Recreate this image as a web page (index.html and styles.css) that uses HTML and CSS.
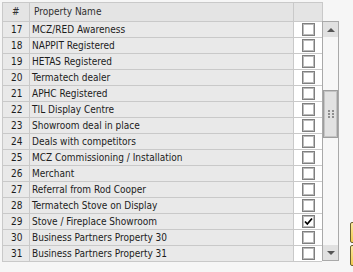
FILE: index.html
```html
<!DOCTYPE html>
<html>
<head>
<meta charset="utf-8">
<link rel="stylesheet" href="styles.css">
</head>
<body>
<div class="page">
  <div class="grid">
    <div class="head">
      <div class="h-num">#</div>
      <div class="h-name">Property Name</div>
      <div class="h-chk"></div>
    </div>
    <div class="body">
      <div class="rows">
        <div class="row"><div class="c-num">17</div><div class="c-name">MCZ/RED Awareness</div><div class="c-chk"><span class="cb"></span></div></div>
        <div class="row"><div class="c-num">18</div><div class="c-name">NAPPIT Registered</div><div class="c-chk"><span class="cb"></span></div></div>
        <div class="row"><div class="c-num">19</div><div class="c-name">HETAS Registered</div><div class="c-chk"><span class="cb"></span></div></div>
        <div class="row"><div class="c-num">20</div><div class="c-name">Termatech dealer</div><div class="c-chk"><span class="cb"></span></div></div>
        <div class="row"><div class="c-num">21</div><div class="c-name">APHC Registered</div><div class="c-chk"><span class="cb"></span></div></div>
        <div class="row"><div class="c-num">22</div><div class="c-name">TIL Display Centre</div><div class="c-chk"><span class="cb"></span></div></div>
        <div class="row"><div class="c-num">23</div><div class="c-name">Showroom deal in place</div><div class="c-chk"><span class="cb"></span></div></div>
        <div class="row"><div class="c-num">24</div><div class="c-name">Deals with competitors</div><div class="c-chk"><span class="cb"></span></div></div>
        <div class="row"><div class="c-num">25</div><div class="c-name">MCZ Commissioning / Installation</div><div class="c-chk"><span class="cb"></span></div></div>
        <div class="row"><div class="c-num">26</div><div class="c-name">Merchant</div><div class="c-chk"><span class="cb"></span></div></div>
        <div class="row"><div class="c-num">27</div><div class="c-name">Referral from Rod Cooper</div><div class="c-chk"><span class="cb"></span></div></div>
        <div class="row"><div class="c-num">28</div><div class="c-name">Termatech Stove on Display</div><div class="c-chk"><span class="cb"></span></div></div>
        <div class="row"><div class="c-num">29</div><div class="c-name">Stove / Fireplace Showroom</div><div class="c-chk"><span class="cb"><svg class="tick" width="11" height="11" viewBox="0 0 11 11"><path d="M2 5.5 L4.3 8 L9 2.5" fill="none" stroke="#000" stroke-width="1.8"/></svg></span></div></div>
        <div class="row"><div class="c-num">30</div><div class="c-name">Business Partners Property 30</div><div class="c-chk"><span class="cb"></span></div></div>
        <div class="row"><div class="c-num">31</div><div class="c-name">Business Partners Property 31</div><div class="c-chk"><span class="cb"></span></div></div>
      </div>
      <div class="scroll">
        <div class="sbtn"><span class="arrow-up"></span></div>
        <div class="thumb">
          <div class="grip"><i></i><i></i><i></i><i></i><i></i><i></i></div>
        </div>
        <div class="track"></div>
        <div class="sbtn"><span class="arrow-down"></span></div>
      </div>
    </div>
  </div>
  <div class="side">
    <div class="ybtn"></div>
    <div class="ybtn"></div>
  </div>
</div>
</body>
</html>
```

FILE: styles.css
```css
html, body {
  margin: 0;
  padding: 0;
  background: #f6f6f6;
  overflow: hidden;
}
.page {
  display: flex;
  align-items: flex-start;
  padding: 2px 0 0 2px;
  font-family: "DejaVu Sans Condensed", "DejaVu Sans", sans-serif;
  font-size: 10px;
  color: #1c1c1c;
}
.grid {
  display: flex;
  flex-direction: column;
}
.head {
  display: flex;
  width: 321px;
  height: 20px;
  box-sizing: border-box;
  border: 1px solid #c9c9c9;
  background: #e4e4e4;
  color: #303030;
}
.h-num {
  width: 27px;
  box-sizing: border-box;
  border-right: 1px solid #c9c9c9;
  padding-left: 9px;
  line-height: 17px;
}
.h-name {
  width: 264px;
  box-sizing: border-box;
  border-right: 1px solid #c9c9c9;
  padding-left: 4px;
  line-height: 17px;
}
.h-chk {
  width: 28px;
}
.body {
  display: flex;
  align-items: flex-start;
}
.rows {
  display: flex;
  flex-direction: column;
  border-left: 1px solid #c9c9c9;
}
.row {
  display: flex;
  height: 16px;
  box-sizing: border-box;
  border-bottom: 1px solid #c9c9c9;
}
.c-num {
  width: 27px;
  box-sizing: border-box;
  border-right: 1px solid #c9c9c9;
  background: #e9e9e9;
  padding-left: 8px;
  line-height: 15px;
}
.c-name {
  width: 264px;
  box-sizing: border-box;
  border-right: 1px solid #c9c9c9;
  background: #e9e9e9;
  padding-left: 2px;
  line-height: 15px;
  white-space: nowrap;
}
.c-chk {
  width: 28px;
  background: #ffffff;
  display: flex;
  align-items: center;
  justify-content: center;
}
.cb {
  width: 13px;
  height: 13px;
  box-sizing: border-box;
  border: 1px solid #7f7f7f;
  box-shadow: inset 0 0 0 1px #bcbcbc;
  background: #fff;
  display: flex;
  align-items: center;
  justify-content: center;
}
.tick {
  display: block;
}
.scroll {
  margin-top: -1px;
  width: 17px;
  height: 240px;
  box-sizing: border-box;
  border: 1px solid #a9a9a9;
  background: #f7f7f7;
  display: flex;
  flex-direction: column;
}
.sbtn {
  height: 15px;
  background: #e1e1e1;
  display: flex;
  align-items: center;
  justify-content: center;
  flex: none;
}
.arrow-up {
  width: 0;
  height: 0;
  border-left: 4px solid transparent;
  border-right: 4px solid transparent;
  border-bottom: 4px solid #555;
}
.arrow-down {
  width: 0;
  height: 0;
  border-left: 4px solid transparent;
  border-right: 4px solid transparent;
  border-top: 4px solid #555;
}
.thumb {
  margin-top: 53px;
  height: 48px;
  flex: none;
  box-sizing: border-box;
  border: 1px solid #9e9e9e;
  box-shadow: inset 0 0 0 1px #c4c4c4;
  background: #e2e2e2;
  display: flex;
  align-items: center;
  justify-content: center;
}
.grip {
  display: grid;
  grid-template-columns: 2px 2px;
  grid-auto-rows: 2px;
  column-gap: 2px;
  row-gap: 1px;
}
.grip i {
  background: #8f8f8f;
}
.track {
  flex: 1;
}
.side {
  margin-left: 11px;
  width: 3px;
  overflow: hidden;
  padding-top: 220px;
  display: flex;
  flex-direction: column;
  gap: 2px;
}
.ybtn {
  width: 60px;
  height: 21px;
  flex: none;
  box-sizing: border-box;
  border: 1px solid #6b5f30;
  border-radius: 2px;
  background: linear-gradient(#fbe8a0, #f2cb4e);
}
```
